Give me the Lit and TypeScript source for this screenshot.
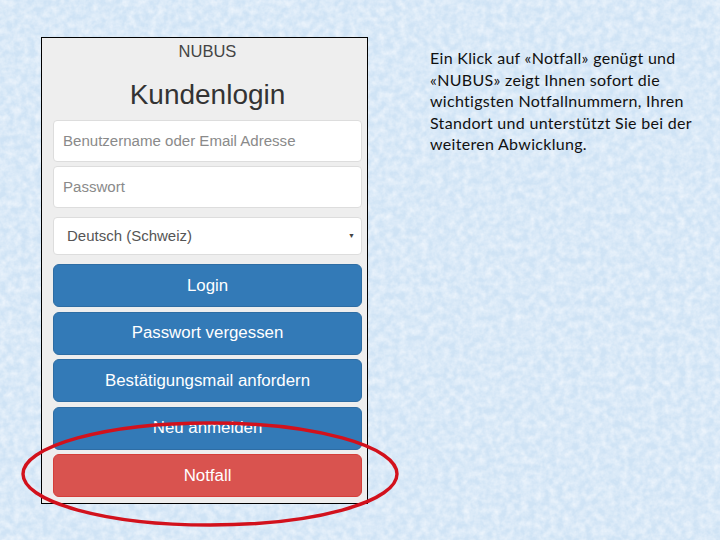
import { LitElement, html, css } from 'lit'
import { customElement } from 'lit/decorators.js'

const buttons = ['Login', 'Passwort vergessen', 'Bestätigungsmail anfordern', 'Neu anmelden']

@customElement('app-root')
export class AppRoot extends LitElement {
	static styles = css`
		:host {
			display: block;
			position: relative;
			width: 720px;
			height: 540px;
			overflow: hidden;
			background: #cfe3f5;
		}
		.texture {
			position: absolute;
			inset: 0;
			width: 720px;
			height: 540px;
		}
		.slide {
			position: relative;
			display: flex;
			align-items: flex-start;
			padding: 37px 0 0 41px;
		}
		.panel {
			box-sizing: border-box;
			width: 327px;
			height: 467px;
			border: 1px solid #000;
			background: #eee;
			padding: 0 5px 0 11px;
			font-family: 'Liberation Sans', Arial, sans-serif;
			display: flex;
			flex-direction: column;
		}
		.brand {
			height: 27px;
			line-height: 27px;
			font-size: 16.5px;
			text-align: center;
			color: #444;
		}
		h1 {
			margin: 0;
			height: 55px;
			line-height: 60px;
			font-size: 28px;
			font-weight: 400;
			text-align: center;
			color: #333;
		}
		.field {
			box-sizing: border-box;
			height: 42px;
			margin-bottom: 4px;
			padding: 0 9px 2px;
			display: flex;
			align-items: center;
			background: #fff;
			border: 1px solid #ddd;
			border-radius: 4px;
			font-size: 15.05px;
			color: #8a8a8a;
		}
		.select {
			height: 38px;
			margin: 5px 0 9px;
			padding: 0 6px 2px 13px;
			justify-content: space-between;
			font-size: 15px;
			color: #555;
		}
		.arrow {
			font-size: 7px;
			color: #444;
		}
		.btn {
			box-sizing: border-box;
			height: 43px;
			margin-bottom: 4.6px;
			display: flex;
			align-items: center;
			justify-content: center;
			background: #337ab7;
			border: 1px solid #2e6da4;
			border-radius: 6px;
			color: #fff;
			font-size: 16.85px;
		}
		.btn.danger {
			background: #d9534f;
			border-color: #d43f3a;
		}
		.note {
			margin: 10px 0 0 62px;
			font-family: Lato, 'Open Sans', sans-serif;
			font-size: 16px;
			letter-spacing: 0.3px;
			line-height: 21.5px;
			color: #111;
			white-space: nowrap;
		}
		.ring {
			position: absolute;
			inset: 0;
			width: 720px;
			height: 540px;
			pointer-events: none;
		}
	`

	render() {
		return html`
			<svg class="texture" viewBox="0 0 720 540" aria-hidden="true">
				<filter id="paper" x="0" y="0" width="100%" height="100%">
					<feTurbulence type="fractalNoise" baseFrequency="0.14" numOctaves="3" seed="8" />
					<feColorMatrix
						type="matrix"
						values="0 0 0 0 0.95  0 0 0 0 0.97  0 0 0 0 1  1.1 0 0 0 -0.3"
					/>
				</filter>
				<rect width="720" height="540" filter="url(#paper)" />
			</svg>
			<div class="slide">
				<div class="panel">
					<div class="brand">NUBUS</div>
					<h1>Kundenlogin</h1>
					<div class="field">Benutzername oder Email Adresse</div>
					<div class="field">Passwort</div>
					<div class="field select">Deutsch (Schweiz)<span class="arrow">▼</span></div>
					${buttons.map((b) => html`<div class="btn">${b}</div>`)}
					<div class="btn danger">Notfall</div>
				</div>
				<p class="note">
					Ein Klick auf «Notfall» genügt und<br />
					«NUBUS» zeigt Ihnen sofort die<br />
					wichtigsten Notfallnummern, Ihren<br />
					Standort und unterstützt Sie bei der<br />
					weiteren Abwicklung.
				</p>
			</div>
			<svg class="ring" viewBox="0 0 720 540" aria-hidden="true">
				<ellipse cx="210" cy="474" rx="187" ry="51" fill="none" stroke="#d2111c" stroke-width="3.4" />
			</svg>
		`
	}
}
